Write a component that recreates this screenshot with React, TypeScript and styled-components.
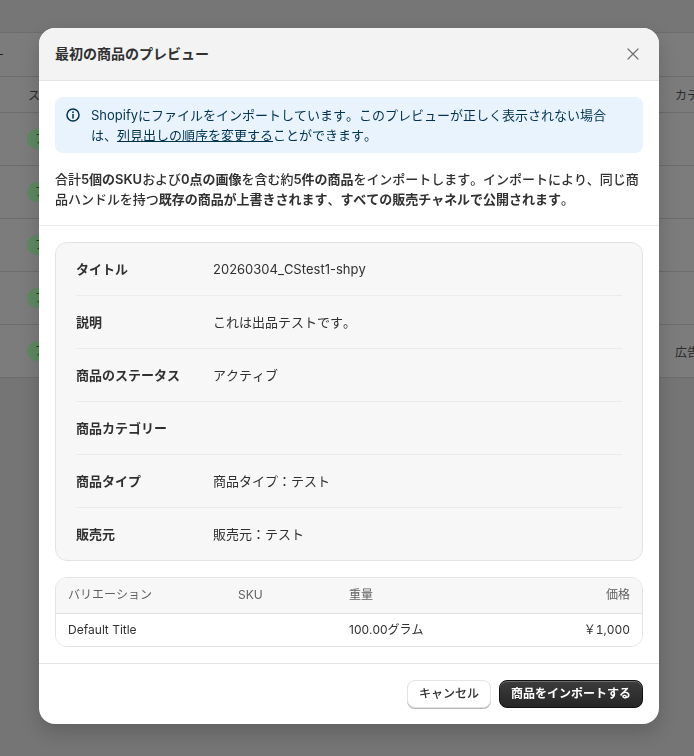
import React from "react";
import styled, { createGlobalStyle } from "styled-components";

const GlobalStyle = createGlobalStyle`
  html, body {
    margin: 0;
    padding: 0;
    background: #757575;
    font-family: Inter, "Noto Sans CJK JP", sans-serif;
    color: #303030;
    font-size: 13px;
    font-kerning: none;
  }
`;

const Page = styled.div`
  height: 756px;
  width: 694px;
  overflow: hidden;
  background: #7c7c7c;
`;

const PageBar = styled.div`
  height: 32px;
  background: #767676;
  border-bottom: 1px solid #6c6c6c;
`;

const PageToolbar = styled.div`
  height: 43px;
  border-bottom: 1px solid #6c6c6c;
  display: flex;
  align-items: center;
`;

const ToolbarDash = styled.span`
  width: 3px;
  height: 1px;
  background: #222;
`;

const BgHeaderRow = styled.div`
  height: 35px;
  border-bottom: 1px solid #6c6c6c;
  display: flex;
  align-items: center;
  justify-content: space-between;
  padding-left: 28px;
  font-size: 12px;
  color: #2a2a2a;
`;

const BgRow = styled.div`
  height: 52px;
  border-bottom: 1px solid #6c6c6c;
  display: flex;
  align-items: center;
  justify-content: space-between;
  padding-left: 27px;
  font-size: 12px;
  color: #2a2a2a;
  overflow: hidden;
`;

const BgBadge = styled.span`
  height: 20px;
  line-height: 20px;
  padding: 0 8px;
  border-radius: 10px;
  background: #5c8a60;
  color: #1d3a20;
`;

const BgEnd = styled.span`
  width: 19px;
  overflow: hidden;
  white-space: nowrap;
`;

const BgPageFill = styled.div`
  height: 379px;
  background: #757575;
`;

const Dialog = styled.div`
  position: fixed;
  left: 39px;
  top: 28px;
  width: 620px;
  height: 696px;
  background: #fff;
  border-radius: 16px;
  overflow: hidden;
  box-shadow: 0 8px 20px rgba(0, 0, 0, 0.18);
  display: flex;
  flex-direction: column;
`;

const DialogHeader = styled.div`
  height: 52px;
  flex: none;
  background: #f3f3f3;
  border-bottom: 1px solid #e3e3e3;
  display: flex;
  align-items: center;
  justify-content: space-between;
  padding: 0 20px 0 16px;
`;

const DialogTitle = styled.h2`
  margin: 0 0 1px;
  font-size: 14px;
  line-height: 20px;
  font-weight: 700;
  color: #303030;
`;

const CloseButton = styled.button`
  border: 0;
  background: none;
  padding: 0;
  width: 12px;
  height: 12px;
  display: flex;
  color: #6f6f6f;
`;

const Intro = styled.div`
  padding: 16px 16px 16px;
  border-bottom: 1px solid #ebebeb;
`;

const Banner = styled.div`
  display: flex;
  gap: 11px;
  padding: 8px 26px 8px 11px;
  height: 56px;
  box-sizing: border-box;
  background: #e8f3fd;
  border-radius: 8px;
  color: #00334f;
  line-height: 20px;
`;

const BannerIcon = styled.svg`
  width: 14px;
  height: 14px;
  flex: none;
  margin-top: 3px;
`;

const BannerLink = styled.a`
  color: #00334f;
  text-decoration: underline;
`;

const IntroText = styled.p`
  margin: 16px 0 0;
  line-height: 20px;
  font-weight: 500;
  letter-spacing: -0.03px;
`;

const Strong = styled.b`
  font-weight: 600;
`;

const Body = styled.div`
  padding: 16px;
  border-bottom: 1px solid #e3e3e3;
`;

const FieldCard = styled.dl`
  margin: 0;
  background: #f7f7f7;
  border: 1px solid #e3e3e3;
  border-radius: 12px;
  padding: 0 20px;
`;

const FieldRow = styled.div`
  height: 53px;
  box-sizing: border-box;
  padding-bottom: 1px;
  line-height: 20px;
  display: flex;
  align-items: center;
  border-bottom: 1px solid #ebebeb;
  &:last-child {
    height: 52px;
    border-bottom: 0;
  }
`;

const FieldLabel = styled.dt`
  width: 137px;
  font-weight: 700;
`;

const FieldValue = styled.dd`
  margin: 0;
`;

const VariantTable = styled.div`
  margin-top: 16px;
  border: 1px solid #e3e3e3;
  border-radius: 12px;
  overflow: hidden;
  font-size: 12px;
  line-height: 16px;
`;

const VariantRow = styled.div<{ $head?: boolean }>`
  display: grid;
  grid-template-columns: 170px 111px 1fr auto;
  align-items: center;
  box-sizing: border-box;
  padding: ${(p) => (p.$head ? "0 12px 2px" : "0 12px")};
  height: ${(p) => (p.$head ? "36px" : "32px")};
  background: ${(p) => (p.$head ? "#f7f7f7" : "#fff")};
  color: ${(p) => (p.$head ? "#616161" : "#303030")};
  border-bottom: ${(p) => (p.$head ? "1px solid #e3e3e3" : "0")};
`;

const Price = styled.span`
  font-variant-numeric: tabular-nums;
`;

const Footer = styled.div`
  display: flex;
  justify-content: flex-end;
  gap: 8px;
  padding: 16px;
`;

const Button = styled.button<{ $primary?: boolean }>`
  height: 28px;
  padding: 0 11px 3px;
  border-radius: 8px;
  font: ${(p) => (p.$primary ? 700 : 500)} 12px Inter, "Noto Sans CJK JP", sans-serif;
  color: ${(p) => (p.$primary ? "#fff" : "#303030")};
  background: ${(p) =>
    p.$primary ? "linear-gradient(#3c3c3c, #262626)" : "#fff"};
  border: ${(p) => (p.$primary ? "1px solid #111" : "1px solid #e3e3e3")};
  box-shadow: ${(p) =>
    p.$primary
      ? "inset 0 1px 0 rgba(255,255,255,.25)"
      : "0 1px 0 #b5b5b5"};
`;

const fields = [
  ["タイトル", "20260304_CStest1-shpy"],
  ["説明", "これは出品テストです。"],
  ["商品のステータス", "アクティブ"],
  ["商品カテゴリー", ""],
  ["商品タイプ", "商品タイプ：テスト"],
  ["販売元", "販売元：テスト"],
];

const App = () => {
  return (
    <>
      <GlobalStyle />
      <Page>
        <PageBar />
        <PageToolbar>
          <ToolbarDash />
        </PageToolbar>
        <BgHeaderRow>
          <span>ス</span>
          <BgEnd>カテ</BgEnd>
        </BgHeaderRow>
        <BgRow><BgBadge>ア</BgBadge></BgRow>
        <BgRow><BgBadge>ア</BgBadge></BgRow>
        <BgRow><BgBadge>ア</BgBadge></BgRow>
        <BgRow><BgBadge>ア</BgBadge></BgRow>
        <BgRow>
          <BgBadge>ア</BgBadge>
          <BgEnd>広告</BgEnd>
        </BgRow>
        <BgPageFill />
      </Page>
      <Dialog>
        <DialogHeader>
          <DialogTitle>最初の商品のプレビュー</DialogTitle>
          <CloseButton aria-label="閉じる">
            <svg viewBox="0 0 12 12" width="12" height="12" fill="none" stroke="currentColor" strokeWidth="1.2" strokeLinecap="round">
              <path d="M1 1l10 10M11 1L1 11" />
            </svg>
          </CloseButton>
        </DialogHeader>
        <Intro>
          <Banner>
            <BannerIcon viewBox="0 0 14 14" fill="none" stroke="#00334f" strokeWidth="1.5">
              <circle cx="7" cy="7" r="6" />
              <path d="M7 6.6v3.4" strokeLinecap="round" />
              <circle cx="7" cy="4.2" r=".9" fill="#00334f" stroke="none" />
            </BannerIcon>
            <div>
              Shopifyにファイルをインポートしています。このプレビューが正しく表示されない場合は、
              <BannerLink>列見出しの順序を変更する</BannerLink>ことができます。
            </div>
          </Banner>
          <IntroText>
            合計<Strong>5個のSKU</Strong>および<Strong>0点の画像</Strong>を含む約<Strong>5件の商品</Strong>をインポートします。インポートにより、同じ商品ハンドルを持つ<Strong>既存の商品が上書きされます</Strong>、<Strong>すべての販売チャネルで公開されます</Strong>。
          </IntroText>
        </Intro>
        <Body>
          <FieldCard>
            {fields.map(([label, value]) => (
              <FieldRow key={label}>
                <FieldLabel>{label}</FieldLabel>
                <FieldValue>{value}</FieldValue>
              </FieldRow>
            ))}
          </FieldCard>
          <VariantTable>
            <VariantRow $head>
              <span>バリエーション</span>
              <span>SKU</span>
              <span>重量</span>
              <span>価格</span>
            </VariantRow>
            <VariantRow>
              <span>Default Title</span>
              <span />
              <span>100.00グラム</span>
              <Price>{"\uFFE51,000"}</Price>
            </VariantRow>
          </VariantTable>
        </Body>
        <Footer>
          <Button>キャンセル</Button>
          <Button $primary>商品をインポートする</Button>
        </Footer>
      </Dialog>
    </>
  );
};

export default App;
